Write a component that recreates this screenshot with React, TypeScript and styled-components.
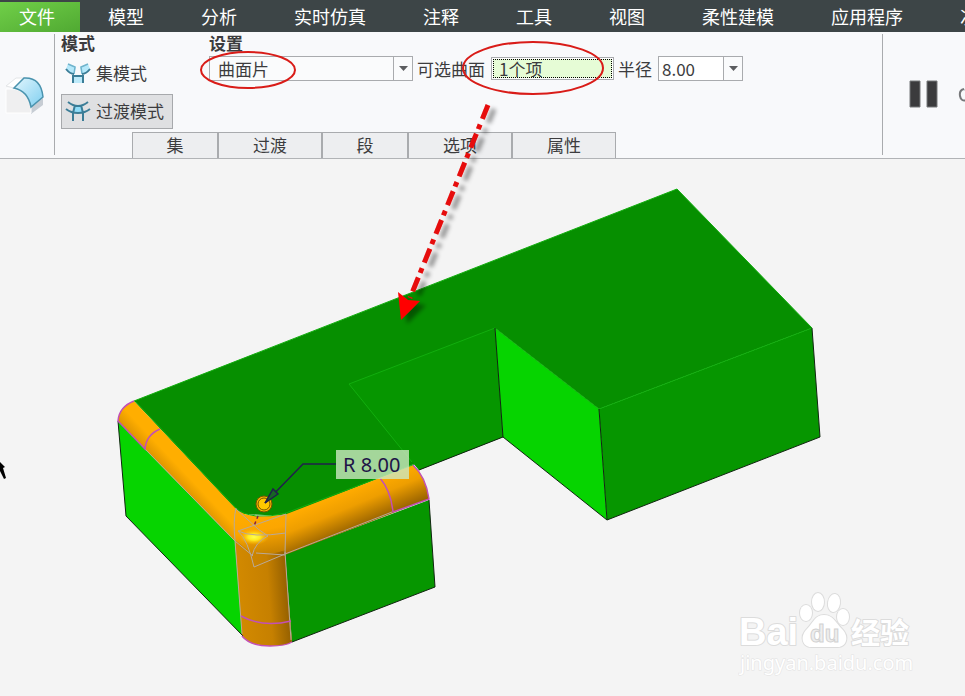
import React from "react";
import styled, { createGlobalStyle, css } from "styled-components";

const GlobalStyle = createGlobalStyle`
  *, *::before, *::after { box-sizing: border-box; }
  body {
    margin: 0;
    background: #f4f4f4;
    color: #3c3c3e;
    font: 17px/22px "Noto Sans CJK SC", sans-serif;
  }
  button, input, select { font: inherit; color: inherit; margin: 0; }
`;

const Page = styled.div`
  position: relative;
  display: flex;
  flex-direction: column;
  height: 100vh;
  overflow: hidden;
`;

const MenuBar = styled.nav`
  display: flex;
  flex: none;
  gap: 57px;
  height: 32px;
  padding-top: 2px;
  overflow: hidden;
  background: #3d4547;
`;

const MenuItem = styled.button<{ $active?: boolean }>`
  flex: none;
  padding: 0 0 2px;
  border: 0;
  background: none;
  color: #fff;
  font-size: 18px;
  line-height: 28px;
  white-space: nowrap;
  ${(p) =>
    p.$active &&
    css`
      width: 80px;
      padding-right: 6px;
      margin-right: -29px;
      background: linear-gradient(160deg, #70cf48, #50a932);
    `}
`;

const Ribbon = styled.header`
  display: flex;
  flex: none;
  background: #f8f9fb;
  border-bottom: 1px solid #b1b3b6;
`;

const FeatureCell = styled.div`
  display: flex;
  flex: none;
  align-items: center;
  width: 55px;
  margin: 2px 0 3px;
  padding-left: 5px;
  border-right: 1px solid #a9abae;
`;

const Dashboard = styled.div`
  display: flex;
  flex: 1 0 auto;
  flex-direction: column;
  padding-left: 6px;
`;

const Groups = styled.div`
  display: flex;
  gap: 36px;
`;

const Group = styled.section<{ $width?: number }>`
  flex: none;
  width: ${(p) => (p.$width ? `${p.$width}px` : "auto")};
`;

const GroupTitle = styled.h2`
  margin: 0 0 2px;
  font-size: 17px;
  line-height: 22px;
  font-weight: 700;
`;

const ModeButton = styled.button<{ $pressed?: boolean }>`
  display: flex;
  align-items: center;
  gap: 5px;
  width: 100%;
  height: 35px;
  padding: 0 0 2px 3px;
  border: 1px solid ${(p) => (p.$pressed ? "#a7a9ac" : "transparent")};
  background: ${(p) => (p.$pressed ? "#dfe0e2" : "transparent")};
  white-space: nowrap;
  & + & { margin-top: 3px; }
`;

const FieldRow = styled.div`
  display: flex;
  align-items: center;
  height: 25px;
`;

const FieldLabel = styled.label`
  padding: 0 6px 0 4px;
  white-space: nowrap;
`;

const Combo = styled.div<{ $width: number }>`
  display: flex;
  width: ${(p) => p.$width}px;
  height: 25px;
  border: 1px solid #a9abae;
  background: #fff;
`;

const ComboSelect = styled.select`
  flex: 1;
  min-width: 0;
  padding: 0 0 0 8px;
  border: 0;
  appearance: none;
  background: #fafbfc;
  outline: none;
`;

const ComboInput = styled.input`
  flex: 1;
  min-width: 0;
  padding: 0 0 0 3px;
  border: 0;
  background: #fff;
  outline: none;
`;

const ComboArrow = styled.button`
  display: flex;
  flex: none;
  align-items: center;
  justify-content: center;
  width: 19px;
  padding: 0;
  border: 0;
  border-left: 1px solid #a9abae;
  background: #fafbfc;
`;

const Collector = styled.div`
  width: 123px;
  height: 23px;
  padding: 1px;
  border: 1px solid #a9abae;
  background: #fff;
`;

const CollectorInput = styled.input`
  display: block;
  width: 100%;
  height: 19px;
  padding: 0 0 0 5px;
  border: 1px dotted #000;
  background: #e6fcd6;
  line-height: 17px;
  outline: none;
`;

const PanelTabs = styled.div`
  display: flex;
  margin: 3px 0 0 71px;
`;

const PanelTab = styled.button<{ $short?: boolean }>`
  width: ${(p) => (p.$short ? 86 : 104)}px;
  height: 26px;
  padding: 0 0 2px;
  border: 1px solid #a9abae;
  border-width: 1px 1px 0;
  background: #edeef0;
`;

const Actions = styled.div`
  display: flex;
  flex: none;
  align-items: center;
  gap: 20px;
  width: 83px;
  margin: 2px 0 3px;
  padding: 0 0 2px 26px;
  overflow: hidden;
  border-left: 1px solid #a9abae;
`;

const IconButton = styled.button`
  display: flex;
  flex: none;
  padding: 0;
  border: 0;
  background: none;
`;

const Viewport = styled.main`
  flex: 1;
  min-height: 0;
`;

const ModelDrawing = styled.svg`
  display: block;
  width: 100%;
  height: 100%;
`;

const Markup = styled.svg`
  position: absolute;
  top: 0;
  left: 0;
  pointer-events: none;
`;

const Watermark = styled.svg`
  position: absolute;
  right: 45px;
  bottom: 16px;
  pointer-events: none;
`;

const DownArrow = () => (
  <svg width="9" height="5" aria-hidden="true">
    <path d="M0 0h9L4.500 5z" fill="#5c5d60" />
  </svg>
);

const RoundIcon = () => (
  <svg width="41" height="42" viewBox="0 0 41 42" aria-hidden="true">
    <defs>
      <linearGradient id="roundFill" x1="0" y1="0" x2="1" y2="1">
        <stop offset="0" stopColor="#e2f6fd" />
        <stop offset="1" stopColor="#7fcff0" />
      </linearGradient>
    </defs>
    <path d="M1 12 11 4h9L9 14z" fill="#fff" stroke="#e3e5e7" />
    <path d="M26 33 38 24v7L26 40z" fill="#c7cdd4" />
    <path d="M1 15h8q14 2 17 18v6H1z" fill="#efeff0" stroke="#fff" />
    <path d="M9 14 19 4q17-1 19 19L26 33Q23 17 9 14z" fill="url(#roundFill)" stroke="#4a93ae" strokeWidth="1.500" />
  </svg>
);

const SetModeIcon = () => (
  <svg width="26" height="22" viewBox="0 0 26 22" aria-hidden="true">
    <path d="M3 2 11 5 9 12Q4 11 1 7zM23 2l-8 3 2 7q5-1 8-5z" fill="#b5e8fa" />
    <path d="M8 14h10v7H8z" fill="#bdeafa" />
    <path d="m3 2 7 3-1 7M23 2l-7 3 1 7" fill="none" stroke="#6fb3cc" strokeWidth="1.500" />
    <path d="M1 7q4 5 8 5M25 7q-4 5-8 5M8 21v-7h10v7" fill="none" stroke="#3b7d97" strokeWidth="2" />
  </svg>
);

const TransitionModeIcon = () => (
  <svg width="26" height="22" viewBox="0 0 26 22" aria-hidden="true">
    <path d="M9 6h8l2 7H7z" fill="#8fdcf8" />
    <path d="M3 2q10 8 20 0M1 9q5 4 12 4t12-4M10 5 8 13v8M16 5l2 8v8" fill="none" stroke="#3b7d97" strokeWidth="2" />
  </svg>
);

const PauseIcon = () => (
  <svg width="29" height="28" aria-hidden="true">
    <path d="M1 1h10v26H1zM18 1h10v26H18z" fill="#3b3b3d" stroke="#77787a" />
  </svg>
);

const GlassesIcon = () => (
  <svg width="36" height="24" viewBox="0 0 36 24" fill="none" stroke="#77787a" strokeWidth="2" aria-hidden="true">
    <path d="M6 7Q1 8 2 14t7 4 5-7-6-4q2-4 6-3" />
    <circle cx="26" cy="13" r="6" />
  </svg>
);

const menus = ["模型", "分析", "实时仿真", "注释", "工具", "视图", "柔性建模", "应用程序", "次"];
const panels = ["集", "过渡", "段", "选项", "属性"];

const FilletedBlock = () => (
  <ModelDrawing viewBox="0 159 965 537" role="img" aria-label="R 8.00">
    <defs>
      <linearGradient id="leftFillet" gradientUnits="userSpaceOnUse" x1="186" y1="455" x2="167" y2="473">
        <stop offset="0" stopColor="#ffae00" />
        <stop offset="0.500" stopColor="#ffae00" />
        <stop offset="1" stopColor="#dd9400" />
      </linearGradient>
      <linearGradient id="rightFillet" gradientUnits="userSpaceOnUse" x1="345" y1="492" x2="360" y2="528">
        <stop offset="0" stopColor="#ffab00" />
        <stop offset="0.400" stopColor="#ee9e00" />
        <stop offset="1" stopColor="#946000" />
      </linearGradient>
      <linearGradient id="column" gradientUnits="userSpaceOnUse" x1="237" y1="600" x2="291" y2="596">
        <stop offset="0" stopColor="#d38a00" />
        <stop offset="0.600" stopColor="#c68000" />
        <stop offset="1" stopColor="#8e5c00" />
      </linearGradient>
      <linearGradient id="corner" x1="0.300" y1="0" x2="0.500" y2="1">
        <stop offset="0" stopColor="#ffad00" />
        <stop offset="0.500" stopColor="#fca600" />
        <stop offset="1" stopColor="#c88300" />
      </linearGradient>
      <radialGradient id="shine">
        <stop offset="0" stopColor="#ffff50" />
        <stop offset="0.400" stopColor="#ffeb20" />
        <stop offset="1" stopColor="#ffb000" stopOpacity="0" />
      </radialGradient>
    </defs>

    <path d="M134 401 677 189 812 328 599 409 495 328 503 437 419 470 414 464 286 516 240 514z" fill="#068f00" />
    <path d="M349 384 495 328 503 437 419 470z" fill="#069600" />
    <path d="M599 409 812 328 820 437 607 520z" fill="#069600" />
    <path d="M495 328 599 409 607 520 503 437z" fill="#06d400" />
    <path d="M118 421 235 541 243 636 126 516z" fill="#06d400" />
    <path d="M285 554 429 500 435 587 292 642z" fill="#069600" />

    <path d="M134 401Q119 407 118 421L235 541 251 556 252 540 236 509z" fill="url(#leftFillet)" />
    <path d="M284 515 413 465Q426 477 429 499L285 555 256 560z" fill="url(#rightFillet)" />
    <path d="M235 540 242 636Q250 646 270 646 286 646 292 642L285 552z" fill="url(#column)" />
    <path d="M235 508Q242 515 256 516 271 517 286 514L285 550Q266 557 252 553L235 540z" fill="url(#corner)" />
    <ellipse cx="254" cy="537" rx="15" ry="8" fill="url(#shine)" />

    <g fill="none" stroke="#12ae0e">
      <path d="M134 401 677 189 812 328 599 409 495 328 349 384 412 462" />
      <path d="M136 402 236 508Q242 514 256 516 271 517 286 513L415 464" />
    </g>
    <g fill="none" stroke="#102510">
      <path d="M118 421 126 516 243 636M292 642 435 587 429 500" />
      <path d="M419 470 503 437 607 520 820 437 812 328M599 409 607 520M495 328 503 437" />
    </g>
    <g fill="none" stroke="#b9a999">
      <path d="M145 449 235 541 253 556M235 541 242 634M285 554 392 512M285 552 291 640" />
      <path d="M236 508Q233 520 235 541M286 514 285 554M238 531 286 514M236 509 258 529M258 529 268 536M238 531Q252 538 286 533M238 531Q248 540 254 567L285 554M268 536Q255 542 252 556M256 553 285 555" />
    </g>
    <g fill="none" stroke="#c250b6" strokeWidth="1.500">
      <path d="M134 401Q119 407 118 421L145 449Q146 435 160 429" />
      <path d="M380 478Q391 491 393 512L429 499Q426 477 413 465" />
      <path d="M241 616Q263 628 291 621M292 642Q286 646 270 646 250 646 242 636" />
    </g>
    <path d="m258 516-4 10" stroke="#831c45" strokeDasharray="3 3" strokeWidth="1.500" />
    <circle cx="264" cy="504" r="8" fill="#ffb800" stroke="#755500" />
    <circle cx="264" cy="504" r="6" fill="#ffc800" stroke="#755500" />
    <path d="M336 464H303L265 503" fill="none" stroke="#20204b" strokeWidth="1.500" />
    <path d="m265 503 8-14 5 5z" fill="#176624" stroke="#20204b" strokeWidth="1.500" />
    <rect x="336" y="450" width="73" height="29" fill="#cce7c0" fillOpacity="0.800" />
    <text x="343" y="472" fontFamily="Noto Sans, sans-serif" fontSize="20" fill="#201347">R 8.00</text>
    <path d="m0 462 5 5-2 1 3 10-2 1-4-8z" fill="#000" />
  </ModelDrawing>
);

export default function App() {
  return (
    <>
      <GlobalStyle />
      <Page>
        <MenuBar>
          <MenuItem $active>文件</MenuItem>
          {menus.map((name) => (
            <MenuItem key={name}>{name}</MenuItem>
          ))}
        </MenuBar>
        <Ribbon>
          <FeatureCell>
            <RoundIcon />
          </FeatureCell>
          <Dashboard>
            <Groups>
              <Group $width={112}>
                <GroupTitle>模式</GroupTitle>
                <ModeButton aria-pressed={false}>
                  <SetModeIcon />
                  集模式
                </ModeButton>
                <ModeButton $pressed aria-pressed>
                  <TransitionModeIcon />
                  过渡模式
                </ModeButton>
              </Group>
              <Group>
                <GroupTitle>设置</GroupTitle>
                <FieldRow>
                  <Combo $width={204}>
                    <ComboSelect aria-label="设置" defaultValue="曲面片">
                      <option>曲面片</option>
                    </ComboSelect>
                    <ComboArrow as="span">
                      <DownArrow />
                    </ComboArrow>
                  </Combo>
                  <FieldLabel htmlFor="surfaces">可选曲面</FieldLabel>
                  <Collector>
                    <CollectorInput id="surfaces" defaultValue="1个项" />
                  </Collector>
                  <FieldLabel htmlFor="radius">半径</FieldLabel>
                  <Combo $width={85}>
                    <ComboInput id="radius" defaultValue="8.00" />
                    <ComboArrow aria-label="半径">
                      <DownArrow />
                    </ComboArrow>
                  </Combo>
                </FieldRow>
              </Group>
            </Groups>
            <PanelTabs>
              {panels.map((name) => (
                <PanelTab key={name} $short={name.length === 1}>
                  {name}
                </PanelTab>
              ))}
            </PanelTabs>
          </Dashboard>
          <Actions>
            <IconButton aria-label="pause">
              <PauseIcon />
            </IconButton>
            <IconButton aria-label="preview">
              <GlassesIcon />
            </IconButton>
          </Actions>
        </Ribbon>
        <Viewport>
          <FilletedBlock />
        </Viewport>

        <Markup width="640" height="340" viewBox="0 0 640 340" aria-hidden="true">
          <defs>
            <filter id="arrowShadow" x="-30%" y="-10%" width="180%" height="130%">
              <feDropShadow dx="6" dy="4" stdDeviation="2" floodColor="#000" floodOpacity="0.400" />
            </filter>
          </defs>
          <g fill="none" stroke="#d91c18" strokeWidth="2">
            <ellipse cx="248" cy="70" rx="47" ry="18" />
            <ellipse cx="533" cy="68" rx="70" ry="26" />
          </g>
          <g filter="url(#arrowShadow)">
            <path d="M488 105 410 298" fill="none" stroke="#e60b0b" strokeWidth="5" strokeDasharray="15 6 5 5" />
            <path d="m398 292 10 8 12 1-19 19z" fill="#f00" />
          </g>
        </Markup>

        <Watermark width="182" height="90" viewBox="738 590 182 90" role="img" aria-label="Baidu 经验">
          <g fill="#fff" stroke="#dcdcdc" strokeWidth="2" paintOrder="stroke" strokeLinejoin="round">
            <text x="739" y="645" fontFamily="Liberation Sans, sans-serif" fontWeight="700" fontSize="38">Bai</text>
            <ellipse cx="806" cy="613" rx="6" ry="8" />
            <ellipse cx="818" cy="602" rx="6" ry="9" />
            <ellipse cx="834" cy="603" rx="6" ry="9" transform="rotate(8 834 603)" />
            <ellipse cx="843" cy="617" rx="6" ry="8" />
            <path d="M824 615c-9 0-11 8-17 14-8 8-4 18 4 18h27c8 0 12-10 4-18-6-6-9-14-18-14z" />
            <text x="851" y="644" fontFamily="Noto Sans CJK SC, sans-serif" fontWeight="700" fontSize="29">经验</text>
          </g>
          <text x="740" y="670" fontFamily="Noto Sans, sans-serif" fontSize="20" fill="#fff" stroke="#e2e2e2" strokeWidth="1" paintOrder="stroke">jingyan.baidu.com</text>
          <text x="810" y="642" fontFamily="Liberation Sans, sans-serif" fontWeight="700" fontSize="24" fill="#eee" stroke="#d2d2d2">du</text>
        </Watermark>
      </Page>
    </>
  );
}
